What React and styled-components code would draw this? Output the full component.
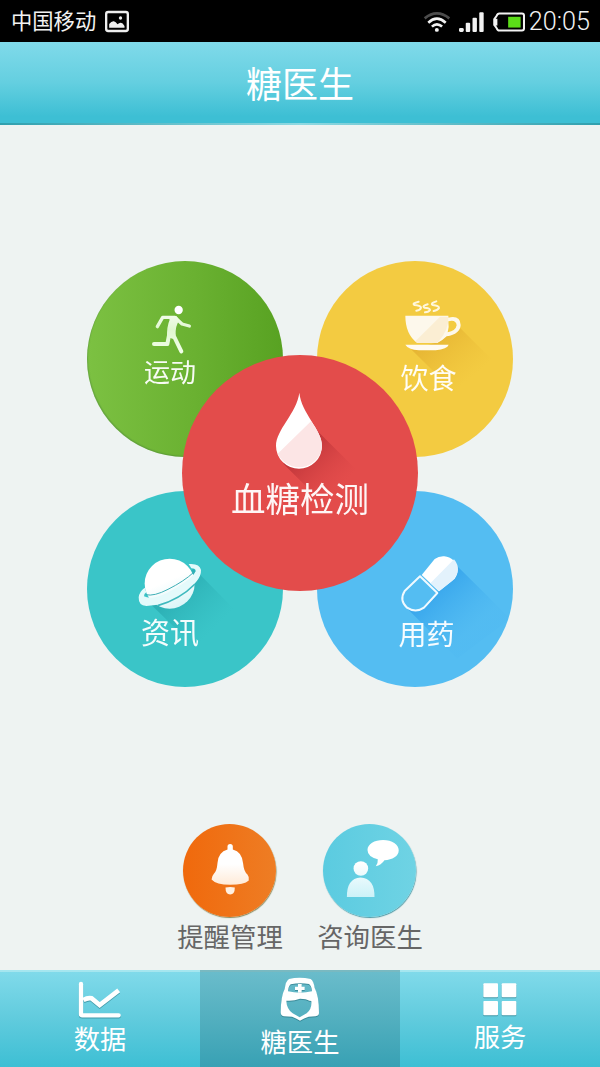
import React from "react";
import styled, { createGlobalStyle } from "styled-components";

const Colors = {
  page: "#eef3f2",
  barTop: "#80daea",
  barBottom: "#3dbfd4",
  green: "linear-gradient(90deg, #7cc142, #6ab131 55%, #58a222)",
  yellow: "#f3cb41",
  red: "#e34c4b",
  teal: "#3ac5c8",
  blue: "#54bdf2",
  text: "#666"
};

const GlobalStyle = createGlobalStyle`
  body {
    margin: 0;
    background: ${Colors.page};
  }
  * { box-sizing: border-box; }
  svg { display: block; flex: none; overflow: visible; }
`;

const Screen = styled.div`
  width: 600px;
  height: 1067px;
  display: flex;
  flex-direction: column;
  overflow: hidden;
  background: ${Colors.page};
  font-family: "Noto Sans CJK SC", sans-serif;
`;

const StatusBar = styled.div`
  height: 42px;
  flex: none;
  display: flex;
  align-items: center;
  padding: 0 10px 0 11px;
  background: #000;
  color: #f2f2f2;
`;

const Carrier = styled.span`
  font-size: 21.3px;
  line-height: 40px;
  margin: 0 9px 2px 0;
`;

const StatusIcons = styled.div`
  display: flex;
  align-items: center;
  gap: 9px;
  margin-left: auto;
  padding-top: 2px;
`;

const Clock = styled.span`
  font-family: Roboto, sans-serif;
  font-size: 25.2px;
  font-weight: 300;
  line-height: 40px;
  margin: 1px 0 0 4px;
`;

const Header = styled.header`
  height: 83px;
  flex: none;
  display: flex;
  justify-content: center;
  background: linear-gradient(${Colors.barTop}, #64cfe0 50%, ${Colors.barBottom} 92%);
  border-bottom: 2px solid #3aa6b4;
  border-image: linear-gradient(90deg, #2f9fae, #8fd9e2 50%, #2f9fae) 1;
`;

const Title = styled.h1`
  margin: 0;
  color: #fff;
  font-size: 36px;
  font-weight: 400;
  line-height: 81px;
`;

const Main = styled.main`
  flex: 1;
  display: flex;
  flex-direction: column;
  align-items: center;
  padding-top: 136px;
`;

const BubbleGrid = styled.div`
  display: grid;
  grid-template: 196px 196px / 196px 196px;
  gap: 34px;
`;

const Bubble = styled.div`
  grid-area: ${(p) => p.$cell};
  border-radius: 50%;
  overflow: hidden;
  display: flex;
  flex-direction: column;
  align-items: center;
  padding-top: ${(p) => p.$top}px;
  padding-left: ${(p) => Math.max(p.$shift, 0) * 2}px;
  padding-right: ${(p) => Math.max(-p.$shift, 0) * 2}px;
  background: ${(p) => p.$bg};
  box-shadow: ${(p) => p.$shadow || "none"};
`;

const CenterBubble = styled(Bubble)`
  place-self: center;
  z-index: 1;
  width: 236px;
  height: 236px;
  margin-bottom: 2px;
`;

const BubbleLabel = styled.span`
  position: relative;
  flex: none;
  color: #fff;
  font-size: ${(p) => p.$size}px;
  line-height: 32px;
  opacity: 0.95;
`;

const Actions = styled.div`
  display: flex;
  margin-top: 137px;
`;

const Action = styled.div`
  width: 140px;
  display: flex;
  flex-direction: column;
  align-items: center;
`;

const ActionDisc = styled.div`
  width: 93px;
  height: 93px;
  margin-right: 1px;
  border-radius: 50%;
  background: ${(p) => p.$bg};
  box-shadow: 0.5px 1px 1px ${(p) => p.$edge};
`;

const ActionLabel = styled.span`
  margin-top: 2px;
  color: ${Colors.text};
  font-size: 26.4px;
  line-height: 34px;
`;

const TabBar = styled.nav`
  height: 97px;
  flex: none;
  display: flex;
`;

const Tab = styled.div`
  flex: 1;
  display: flex;
  flex-direction: column;
  align-items: center;
  padding-top: ${(p) => p.$top}px;
  border-top: 2px solid ${(p) => (p.$active ? "#79b9c1" : "#a5e6ef")};
  background: ${(p) =>
    p.$active
      ? "linear-gradient(#6abccb, #52afbf 50%, #38a1b4)"
      : `linear-gradient(${Colors.barTop}, #60cbdd 50%, ${Colors.barBottom})`};

  svg {
    filter: drop-shadow(0.7px 1px 0.6px rgba(20, 90, 105, 0.45));
  }
`;

const TabLabel = styled.span`
  margin-top: 4px;
  color: #fff;
  font-size: 26.3px;
  line-height: 32px;
`;

function PhotoIcon() {
  return (
    <svg width="24" height="21" viewBox="315 32 71 63">
      <rect x="318" y="35" width="65" height="57" rx="6" fill="none" stroke="#eee" strokeWidth="7" />
      <path d="M327 82V71q7-9 14-8 6 2 11 9 5-5 9-5 6-1 12 10v5z" fill="#eee" />
      <circle cx="361" cy="53" r="5" fill="#eee" />
    </svg>
  );
}

function WifiIcon() {
  return (
    <svg width="26" height="20" viewBox="65 35 79 60" fill="none" strokeWidth="8">
      <path d="M67 54Q104 24 142 54" stroke="#4c4c4c" />
      <path d="M78 67Q104 43 131 67M89 79Q104 65 120 79" stroke="#f2f2f2" />
      <circle cx="104" cy="89" r="6" fill="#f2f2f2" />
    </svg>
  );
}

function SignalIcon() {
  return (
    <svg width="25" height="20" viewBox="169 37 74 59" fill="#f2f2f2">
      <rect x="169" y="84" width="14" height="12" rx="4" />
      <rect x="189" y="69" width="13" height="27" rx="3" />
      <rect x="209" y="54" width="13" height="42" rx="3" />
      <rect x="229" y="38" width="13" height="58" rx="3" />
    </svg>
  );
}

function BatteryIcon() {
  return (
    <svg width="32" height="20" viewBox="273 38 95 59">
      <path
        d="M292 42H359Q365 42 365 48V87Q365 93 359 93H292Q286 93 284 86L277 76V59L284 49Q286 42 292 42Z"
        fill="none"
        stroke="#f2f2f2"
        strokeWidth="6"
        strokeLinejoin="round"
      />
      <path d="M275 58h11v20h-11z" fill="#f2f2f2" />
      <rect x="318" y="52" width="37" height="32" fill="#5bdc18" />
    </svg>
  );
}

function RunnerIcon() {
  return (
    <svg width="60" height="51" viewBox="180 147 180 153">
      <defs>
        <linearGradient id="runner" x1="0" y1="150" x2="0" y2="295" gradientUnits="userSpaceOnUse">
          <stop offset="0" stopColor="#fff" />
          <stop offset=".5" stopColor="#e0f7cf" />
          <stop offset="1" stopColor="#f2ffe9" />
        </linearGradient>
      </defs>
      <circle cx="296" cy="165" r="12.5" fill="#fff" />
      <g fill="none" stroke="url(#runner)" strokeWidth="10" strokeLinecap="round" strokeLinejoin="round">
        <path d="M232 215L248 187H285L306 207L328 213" />
        <path d="M268 236L262 267H222" strokeWidth="12" />
        <path d="M278 236L304 289" strokeWidth="12" />
      </g>
      <path d="M262 184H290L298 196Q286 212 287 240L280 252L261 246Q260 215 269 194Z" fill="url(#runner)" />
    </svg>
  );
}

function CupIcon() {
  return (
    <svg width="60" height="62" viewBox="265 132 180 186">
      <defs>
        <linearGradient id="cupShade" x1="360" y1="230" x2="480" y2="370" gradientUnits="userSpaceOnUse">
          <stop offset="0" stopColor="#dfa92c" stopOpacity=".7" />
          <stop offset="1" stopColor="#e9b934" stopOpacity="0" />
        </linearGradient>
      </defs>
      <path d="M303 284L380 262L440 220L449 220L580 350L470 450Z" fill="url(#cupShade)" />
      <path d="M284 182H413V188Q449 180 450 210Q449 237 408 244Q395 257 380 264H320Q284 238 284 182Z" fill="#fdf8ec" />
      <path d="M413 199Q436 193 438 211Q435 228 411 232Q416 218 413 199Z" fill={Colors.yellow} />
      <path d="M388 185H413Q416 224 380 264H320Q317 262 314 259Z" fill="#fbeed3" />
      <path d="M284 269H414Q410 282 375 286H325Q292 283 284 269Z" fill="#fffaf0" />
      <g fill="none" stroke="#fff7dc" strokeWidth="6" strokeLinecap="round">
        <path d="M324 140Q303 145 311 150Q331 152 331 158Q329 166 317 167" />
        <path d="M351 148Q333 153 341 158Q358 159 358 165Q355 171 343 172" />
        <path d="M377 139Q358 145 366 150Q386 152 385 159Q381 166 369 168" />
      </g>
    </svg>
  );
}

function DropIcon() {
  return (
    <svg width="60" height="91" viewBox="270 120 180 273">
      <defs>
        <linearGradient id="dropShade" x1="370" y1="300" x2="480" y2="410" gradientUnits="userSpaceOnUse">
          <stop offset="0" stopColor="#b83136" stopOpacity=".8" />
          <stop offset="1" stopColor="#d64244" stopOpacity="0" />
        </linearGradient>
      </defs>
      <path d="M310 341L400 225L416 247L560 390L420 450Z" fill="url(#dropShade)" />
      <path d="M358 128C364 190 426 238 426 288A69 68 0 0 1 288 288C288 238 350 190 358 128Z" fill="#fff" />
      <path d="M393 214C410 238 426 262 426 288A69 68 0 0 1 303 326Q294 316 293 311Z" fill="#fce5e5" />
    </svg>
  );
}

function PlanetIcon() {
  return (
    <svg width="64" height="59" viewBox="174 212 192 177">
      <defs>
        <linearGradient id="planetShade" x1="290" y1="320" x2="400" y2="430" gradientUnits="userSpaceOnUse">
          <stop offset="0" stopColor="#26a6ac" stopOpacity=".65" />
          <stop offset="1" stopColor="#2fb5ba" stopOpacity="0" />
        </linearGradient>
        <linearGradient id="planet" x1="240" y1="230" x2="300" y2="370" gradientUnits="userSpaceOnUse">
          <stop offset=".4" stopColor="#fff" />
          <stop offset="1" stopColor="#d8f5f7" />
        </linearGradient>
      </defs>
      <path d="M215 360L340 250L362 270L500 410L370 510Z" fill="url(#planetShade)" />
      <circle cx="269" cy="295" r="75" fill="url(#planet)" />
      <path
        d="M326 236Q359 233 363 254Q365 287 304 326Q247 362 199 362Q175 361 176 336Q177 320 194 307L199 321Q190 327 192 333Q215 345 262 322Q333 286 347 258Q348 249 334 249Z"
        fill="#e4fafb"
      />
      <path d="M197 328Q222 334 264 312Q312 288 341 261" fill="none" stroke="#3eaeb5" strokeWidth="3" />
      <path d="M233 361Q300 342 345 296" fill="none" stroke="#3eb9be" strokeWidth="5" />
    </svg>
  );
}

function PillIcon() {
  return (
    <svg width="60" height="65" viewBox="260 200 180 195">
      <defs>
        <linearGradient id="pillShade" x1="365" y1="300" x2="485" y2="430" gradientUnits="userSpaceOnUse">
          <stop offset="0" stopColor="#2e9eea" stopOpacity=".8" />
          <stop offset="1" stopColor="#43aff0" stopOpacity="0.1" />
        </linearGradient>
      </defs>
      <path d="M290 369L380 325L434 236L600 400L440 520Z" fill="url(#pillShade)" />
      <path d="M334 269L373 221A43 42 0 0 1 433 280L386 318Z" fill="#fff" />
      <path d="M360 294L431 222Q457 254 426 286L386 318Z" fill="#e3f2fc" />
      <path
        d="M329 273L381 323L341 367Q316 384 290 367Q266 345 283 317Z"
        fill={Colors.blue}
        stroke="#f0faff"
        strokeWidth="6"
        strokeLinejoin="round"
      />
    </svg>
  );
}

function BellIcon() {
  return (
    <svg width="93" height="93" viewBox="40 26 280 280">
      <defs>
        <linearGradient id="bell" x1="0" y1="85" x2="0" y2="240" gradientUnits="userSpaceOnUse">
          <stop offset=".4" stopColor="#fff" />
          <stop offset="1" stopColor="#ffe0c4" />
        </linearGradient>
      </defs>
      <path
        d="M174 103V94Q174 86 182 86Q190 86 190 94V103Q218 110 221 145Q223 169 234 178Q240 185 238 196Q224 209 182 209Q140 209 126 193Q126 184 133 176Q142 168 144 143Q146 111 174 103Z"
        fill="url(#bell)"
      />
      <path d="M168 217Q182 214 196 217Q196 238 182 238Q168 238 168 217Z" fill="#fff0e2" />
    </svg>
  );
}

function ConsultIcon() {
  return (
    <svg width="93" height="93" viewBox="460 26 280 280">
      <defs>
        <linearGradient id="consult" x1="0" y1="75" x2="0" y2="245" gradientUnits="userSpaceOnUse">
          <stop offset=".4" stopColor="#fff" />
          <stop offset="1" stopColor="#ccf2f8" />
        </linearGradient>
      </defs>
      <g fill="url(#consult)">
        <path d="M641 74C668 74 688 87 688 105S669 134 645 135Q635 150 619 153Q626 145 625 132Q594 124 594 104C594 86 615 74 641 74Z" />
        <circle cx="574" cy="160" r="22" />
        <path d="M532 246Q531 190 573 187Q616 190 615 246Z" />
      </g>
    </svg>
  );
}

function ChartIcon() {
  return (
    <svg width="42" height="36" viewBox="237 65 126 108" fill="none" stroke="#fff">
      <path d="M243 71V162Q243 165 247 165H356" strokeWidth="13" strokeLinecap="round" />
      <path d="M250 119Q264 111 275 114L299 134L356 90" strokeWidth="14" />
    </svg>
  );
}

function NurseIcon() {
  return (
    <svg width="40" height="43" viewBox="240 55 120 129">
      <path
        fill="#fff"
        fillRule="evenodd"
        d="M267 58Q298 51 332 58Q341 64 344 85Q357 108 357 160Q357 168 347 170L326 171Q312 176 300 183Q288 176 276 171L251 170Q242 168 242 158Q243 108 254 88Q257 64 267 58ZM272 74Q265 80 264 95Q300 103 336 95Q335 79 327 73Q300 68 272 74ZM259 123Q260 148 278 161L299 173L320 161Q336 148 334 124L328 123Q319 117 300 117Q281 125 259 123Z"
      />
      <path d="M294 73h11v8h9v10h-9v8h-11v-8h-9v-10h9z" fill="#fff" />
    </svg>
  );
}

function GridIcon() {
  return (
    <svg width="34" height="33" viewBox="247 70 102 99" fill="#fff">
      <rect x="248" y="71" width="44" height="42" rx="3" />
      <rect x="303" y="71" width="44" height="42" rx="3" />
      <rect x="248" y="124" width="44" height="43" rx="3" />
      <rect x="303" y="124" width="44" height="43" rx="3" />
    </svg>
  );
}

export default function App() {
  return (
    <>
      <GlobalStyle />
      <Screen>
        <StatusBar>
          <Carrier>中国移动</Carrier>
          <PhotoIcon />
          <StatusIcons>
            <WifiIcon />
            <SignalIcon />
            <BatteryIcon />
          </StatusIcons>
          <Clock>20:05</Clock>
        </StatusBar>

        <Header>
          <Title>糖医生</Title>
        </Header>

        <Main>
          <BubbleGrid>
            <Bubble
              $cell="1 / 1"
              $bg={Colors.green}
              $shadow="inset 1px -1px 1px rgba(60, 110, 60, 0.3)"
              $top={43}
              $shift={-15}
            >
              <RunnerIcon />
              <BubbleLabel $size={26}>运动</BubbleLabel>
            </Bubble>
            <Bubble $cell="1 / 2" $bg={Colors.yellow} $top={38} $shift={13.5}>
              <CupIcon />
              <BubbleLabel $size={28}>饮食</BubbleLabel>
            </Bubble>
            <Bubble $cell="2 / 1" $bg={Colors.teal} $top={65} $shift={-15}>
              <PlanetIcon />
              <BubbleLabel $size={29}>资讯</BubbleLabel>
            </Bubble>
            <Bubble $cell="2 / 2" $bg={Colors.blue} $top={61} $shift={11.5}>
              <PillIcon />
              <BubbleLabel $size={28}>用药</BubbleLabel>
            </Bubble>
            <CenterBubble $cell="1 / 1 / 3 / 3" $bg={Colors.red} $top={35} $shift={0}>
              <DropIcon />
              <BubbleLabel $size={34.5}>血糖检测</BubbleLabel>
            </CenterBubble>
          </BubbleGrid>

          <Actions>
            <Action>
              <ActionDisc $bg="linear-gradient(90deg, #f0690c, #ee7d24)" $edge="#8a8a5c">
                <BellIcon />
              </ActionDisc>
              <ActionLabel>提醒管理</ActionLabel>
            </Action>
            <Action>
              <ActionDisc $bg="linear-gradient(90deg, #5bcbe0, #6fd3e4)" $edge="#4d9aa6">
                <ConsultIcon />
              </ActionDisc>
              <ActionLabel>咨询医生</ActionLabel>
            </Action>
          </Actions>
        </Main>

        <TabBar>
          <Tab $top={10}>
            <ChartIcon />
            <TabLabel>数据</TabLabel>
          </Tab>
          <Tab $active $top={6}>
            <NurseIcon />
            <TabLabel>糖医生</TabLabel>
          </Tab>
          <Tab $top={11}>
            <GridIcon />
            <TabLabel>服务</TabLabel>
          </Tab>
        </TabBar>
      </Screen>
    </>
  );
}
